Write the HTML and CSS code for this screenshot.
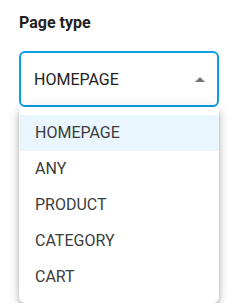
FILE: index.html
```html
<!DOCTYPE html>
<html lang="en">
<head>
    <meta charset="UTF-8">
    <meta name="viewport" content="width=device-width, initial-scale=1.0">
    <title>Page type</title>
    <link rel="stylesheet" href="styles.css">
</head>
<body>
    <div class="field">
        <label class="field-label">Page type</label>

        <div class="select">
            <span class="select-value">HOMEPAGE</span>
            <svg class="select-arrow" width="10" height="5" viewBox="0 0 10 5">
                <path d="M0 5 L5 0 L10 5 Z" fill="#757575"/>
            </svg>
        </div>

        <ul class="menu">
            <li class="menu-item selected">HOMEPAGE</li>
            <li class="menu-item">ANY</li>
            <li class="menu-item">PRODUCT</li>
            <li class="menu-item">CATEGORY</li>
            <li class="menu-item">CART</li>
        </ul>
    </div>
</body>
</html>
```

FILE: styles.css
```css
body {
    font-family: Roboto, "Liberation Sans", sans-serif;
    background-color: #fff;
    color: #212121;
    margin: 0;
    padding: 0;
}

.field {
    width: 200px;
    padding: 13px 0 0 19px;
}

.field-label {
    display: block;
    font-size: 16px;
    font-weight: 700;
    line-height: 20px;
    color: #212121;
    margin-bottom: 18px;
}

.select {
    display: flex;
    align-items: center;
    justify-content: space-between;
    box-sizing: border-box;
    height: 56px;
    padding: 0 12px 0 13px;
    border: 2px solid #0a9fe6;
    border-radius: 6px;
}

.select-value {
    font-size: 16px;
    color: #212121;
}

.select-arrow {
    display: block;
}

.menu {
    list-style: none;
    margin: 0;
    padding: 8px 0;
    background-color: #fff;
    border-radius: 4px 4px 6px 6px;
    box-shadow: 0 3px 5px -1px rgba(0,0,0,0.2), 0 5px 8px rgba(0,0,0,0.14), 0 1px 14px rgba(0,0,0,0.12);
}

.menu-item {
    height: 36px;
    line-height: 36px;
    padding-left: 16px;
    font-size: 16px;
    color: #3c3c3c;
}

.menu-item.selected {
    background-color: #e9f6fd;
}
```
